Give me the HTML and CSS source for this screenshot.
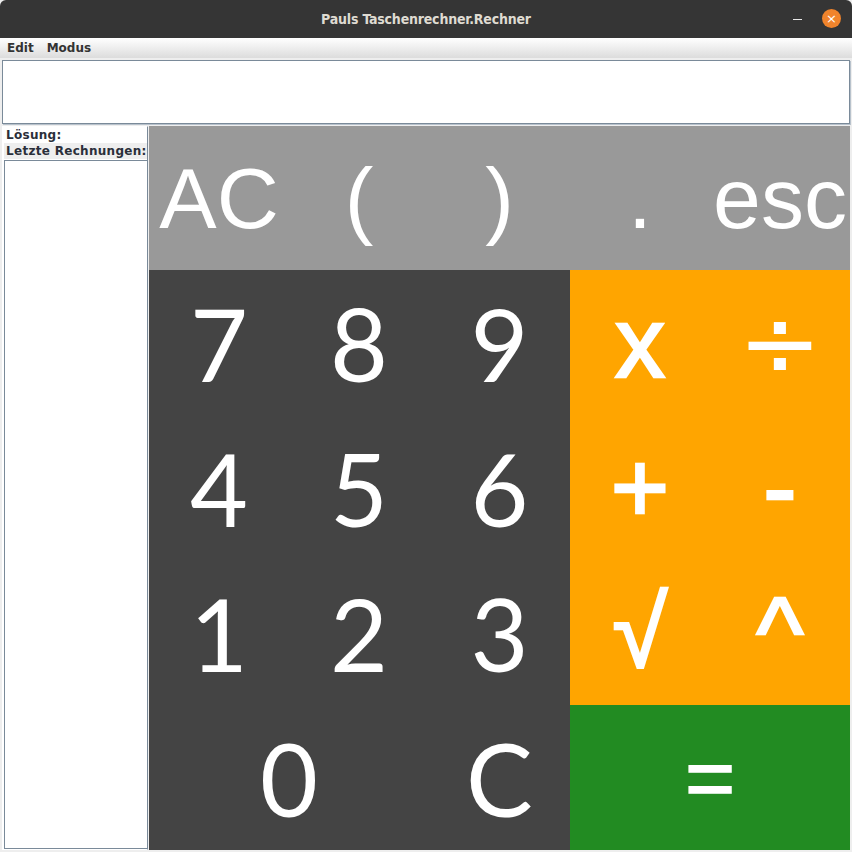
FILE: index.html
```html
<!DOCTYPE html>
<html lang="de">
<head>
<meta charset="utf-8">
<title>Pauls Taschenrechner.Rechner</title>
<link rel="stylesheet" href="styles.css">
</head>
<body>
<div class="window">
  <div class="titlebar">
    <span class="title">Pauls Taschenrechner.Rechner</span>
    <div class="controls">
      <span class="min"></span>
      <span class="close">×</span>
    </div>
  </div>
  <div class="menubar"><span class="menu">Edit</span><span class="menu">Modus</span></div>
  <div class="frame">
    <div class="input"></div>
    <div class="main">
      <div class="side">
        <div class="lbl">Lösung:</div>
        <div class="lbl sel">Letzte Rechnungen:</div>
        <div class="list"></div>
      </div>
      <div class="pad">
        <div class="key top">AC</div>
        <div class="key top">(</div>
        <div class="key top">)</div>
        <div class="key top">.</div>
        <div class="key top">esc</div>

        <div class="key num">7</div>
        <div class="key num">8</div>
        <div class="key num">9</div>
        <div class="key op">x</div>
        <div class="key op div">÷</div>

        <div class="key num">4</div>
        <div class="key num">5</div>
        <div class="key num">6</div>
        <div class="key op">+</div>
        <div class="key op">-</div>

        <div class="key num">1</div>
        <div class="key num">2</div>
        <div class="key num">3</div>
        <div class="key op">√</div>
        <div class="key op">^</div>

        <div class="key num zero">0</div>
        <div class="key num">C</div>
        <div class="key eq">=</div>
      </div>
    </div>
  </div>
</div>
</body>
</html>
```
FILE: styles.css
```css
html, body {
  margin: 0;
  padding: 0;
}
body {
  width: 852px;
  height: 852px;
  overflow: hidden;
  background: #eeeeee;
  font-family: "DejaVu Sans", sans-serif;
}
.window {
  width: 852px;
  height: 852px;
  display: flex;
  flex-direction: column;
}
.titlebar {
  height: 38px;
  background: #353535;
  border-radius: 6px 6px 0 0;
  position: relative;
  display: flex;
  align-items: center;
  justify-content: center;
}
.title {
  font-family: "DejaVu Sans Condensed", "DejaVu Sans", sans-serif;
  font-weight: bold;
  font-size: 14px;
  color: #dfdbd2;
  letter-spacing: -0.2px;
}
.controls {
  position: absolute;
  right: 11px;
  top: 9px;
  display: flex;
  align-items: center;
  gap: 20px;
}
.min {
  width: 9px;
  height: 1.5px;
  background: #e8e8e8;
  margin-top: 2px;
}
.close {
  width: 19px;
  height: 19px;
  border-radius: 50%;
  background: #f0842c;
  color: #fff;
  font-size: 13px;
  line-height: 19px;
  text-align: center;
  font-family: "DejaVu Sans", sans-serif;
}
.menubar {
  height: 20px;
  background: linear-gradient(#ffffff, #dcdcdc);
  display: flex;
  align-items: center;
  padding-left: 7px;
  gap: 13px;
  box-sizing: border-box;
}
.menu {
  font-size: 12px;
  font-weight: bold;
  color: #333333;
}
.frame {
  flex: 1;
  display: flex;
  flex-direction: column;
  padding: 2px;
  gap: 2px;
  background: #eeeeee;
}
.input {
  height: 64px;
  box-sizing: border-box;
  background: #ffffff;
  border: 1px solid #7a8a99;
  box-shadow: inset 1px 1px 0 #ffffff, 1px 1px 0 #b8c2cc;
}
.main {
  flex: 1;
  display: flex;
  gap: 1px;
}
.side {
  width: 146px;
  box-sizing: border-box;
  background: #ffffff;
  border: 1px solid #ffffff;
  border-right: 1px solid #7a8a99;
  display: flex;
  flex-direction: column;
  padding-left: 1px;
}
.lbl {
  font-size: 12px;
  font-weight: bold;
  color: #2a2f3a;
  height: 16px;
  line-height: 16px;
  padding-left: 2px;
  letter-spacing: 0.3px;
  white-space: nowrap;
}
.sel {
  background: #eeeeee;
}
.list {
  flex: 1;
  margin-top: 1px;
  border: 1px solid #7a8a99;
  border-right: 0;
  background: #ffffff;
}
.pad {
  width: 701px;
  display: grid;
  grid-template-columns: 140px 140px 141px 140px 140px;
  grid-template-rows: 144px 145px 145px 145px 145px;
}
.key {
  display: flex;
  align-items: center;
  justify-content: center;
  color: #ffffff;
  overflow: visible;
}
.top {
  background: #999999;
  font-family: "Liberation Sans", Arial, sans-serif;
  font-size: 86px;
}
.num {
  background: #444444;
  font-family: Lato, sans-serif;
  font-size: 100px;
}
.zero {
  grid-column: span 2;
}
.op {
  background: #ffa500;
  font-family: "Liberation Sans", Arial, sans-serif;
  font-size: 100px;
  -webkit-text-stroke: 2.5px #ffffff;
}
.div {
  font-family: "DejaVu Sans", sans-serif;
  -webkit-text-stroke: 0;
}
.eq {
  grid-column: span 2;
  background: #228b22;
  font-family: "Liberation Sans", Arial, sans-serif;
  font-size: 86px;
  -webkit-text-stroke: 1.5px #ffffff;
}
```
